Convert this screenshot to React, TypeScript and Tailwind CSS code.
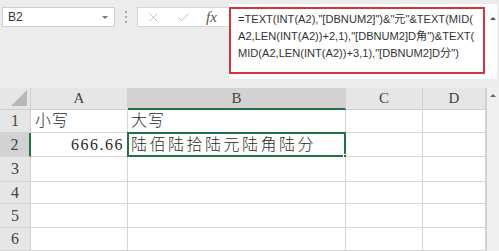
import { X, Check } from "lucide-react"

const cols = [
  { name: "A", w: 97 },
  { name: "B", w: 218 },
  { name: "C", w: 77 },
  { name: "D", w: 63 }
]

const rowHeights = [23, 24, 25, 22, 24, 23]

const serif = "font-['Liberation_Serif','Noto_Sans_CJK_SC',serif]"

function Cell({ row, col }: { row: number; col: number }) {
  let content: React.ReactNode = null
  if (row === 1 && col === 0) content = <span className="pl-[4px] tracking-[1px]">小写</span>
  if (row === 1 && col === 1) content = <span className="pl-[3px] tracking-[1px]">大写</span>
  if (row === 2 && col === 0)
    content = <span className="ml-auto pr-[3px] tracking-[1.5px]">666.66</span>
  if (row === 2 && col === 1)
    content = <span className="pl-[3px] tracking-[2.5px]">陆佰陆拾陆元陆角陆分</span>

  return (
    <div className={`relative flex items-center bg-white border-r border-b border-[#d6d6d6] text-[16px] text-[#2a2a2a] font-light ${serif} whitespace-nowrap`}>
      {content}
      {row === 2 && col === 1 && (
        <>
          <div className="absolute -left-px -top-px -right-px -bottom-px border-2 border-[#217346]" />
          <div className="absolute -right-[3px] -bottom-[3px] w-[5px] h-[5px] bg-[#217346] border border-white" />
        </>
      )}
    </div>
  )
}

export default function App() {
  return (
    <div className="w-[499px] h-[251px] overflow-hidden bg-[#ececec] font-['Liberation_Sans','Noto_Sans_CJK_SC',sans-serif]">
      {/* formula bar */}
      <div className="h-[88px] flex items-start pl-[2px]">
        <div className="mt-[7px] w-[113px] h-[20px] bg-white border border-[#cfcfcf] flex items-center pl-[5px] pr-[6px] text-[12px] text-[#333]">
          <span>B2</span>
          <span className="ml-auto w-0 h-0 border-l-[3px] border-r-[3px] border-t-[3px] border-l-transparent border-r-transparent border-t-[#777]" />
        </div>
        <div className="mt-[11px] w-[22px] flex flex-col items-center gap-[3px]">
          <span className="w-[2px] h-[2px] bg-[#aaa]" />
          <span className="w-[2px] h-[2px] bg-[#aaa]" />
          <span className="w-[2px] h-[2px] bg-[#aaa]" />
        </div>
        <div className="mt-[7px] w-[92px] h-[20px] bg-white border border-r-0 border-[#d6d6d6] flex items-center pl-[8px]">
          <X size={15} strokeWidth={1.2} className="text-[#b0b0b0]" />
          <Check size={15} strokeWidth={1.2} className="ml-[15px] text-[#b0b0b0]" />
          <span className="ml-[15px] text-[15px] italic text-[#555] font-['Liberation_Serif',serif] leading-none">fx</span>
        </div>
        <div className="mt-[4px] w-[268px] h-[75px] bg-white flex items-start">
          <div className="mt-[3px] w-[256px] h-[67px] border-2 border-[#d7333b] pl-[7px] pt-[2px] text-[11.1px] leading-[17px] text-[#333] whitespace-nowrap overflow-hidden">
            <div>=TEXT(INT(A2),"[DBNUM2]")&amp;"元"&amp;TEXT(MID(</div>
            <div>A2,LEN(INT(A2))+2,1),"[DBNUM2]D角")&amp;TEXT(</div>
            <div>MID(A2,LEN(INT(A2))+3,1),"[DBNUM2]D分")</div>
          </div>
          <span className="ml-[5px] mt-[13px] w-0 h-0 border-l-[3px] border-r-[3px] border-b-[3px] border-l-transparent border-r-transparent border-b-[#555]" />
        </div>
      </div>

      {/* grid */}
      <div className="flex">
        <div
          className="grid"
          style={{
            gridTemplateColumns: `31px ${cols.map((c) => c.w + "px").join(" ")}`,
            gridTemplateRows: `22px ${rowHeights.map((h) => h + "px").join(" ")}`
          }}>
          {/* corner */}
          <div className="relative bg-[#e6e6e6] border-r border-b border-[#cfcfcf]">
            <svg className="absolute right-[3px] bottom-[3px]" width="16" height="16" viewBox="0 0 16 16">
              <polygon points="16,0 16,16 0,16" fill="#b8b8b8" />
            </svg>
          </div>
          {cols.map((c, i) => (
            <div
              key={c.name}
              className={`flex items-center justify-center ${serif} text-[15px] text-[#444] border-r border-[#d0d0d0] ${
                i === 1
                  ? "bg-[#d2d2d2] border-b-2 border-b-[#217346]"
                  : "bg-[#e6e6e6] border-b border-b-[#cfcfcf]"
              }`}>
              {c.name}
            </div>
          ))}
          {rowHeights.map((_, r) => (
            <div key={r} className="contents">
              <div
                className={`flex items-center justify-center ${serif} text-[16px] text-[#444] border-b border-[#d6d6d6] ${
                  r === 1
                    ? "bg-[#d2d2d2] border-r-2 border-r-[#217346]"
                    : "bg-[#e6e6e6] border-r border-r-[#cfcfcf]"
                }`}>
                {r + 1}
              </div>
              {cols.map((c, ci) => (
                <Cell key={c.name} row={r + 1} col={ci} />
              ))}
            </div>
          ))}
        </div>
        {/* scrollbar */}
        <div className="w-[13px] h-[163px] bg-[#f0f0f0] border-l border-[#cfcfcf] flex justify-center">
          <span className="mt-[6px] w-0 h-0 border-l-[3px] border-r-[3px] border-b-[3px] border-l-transparent border-r-transparent border-b-[#666]" />
        </div>
      </div>
    </div>
  )
}
